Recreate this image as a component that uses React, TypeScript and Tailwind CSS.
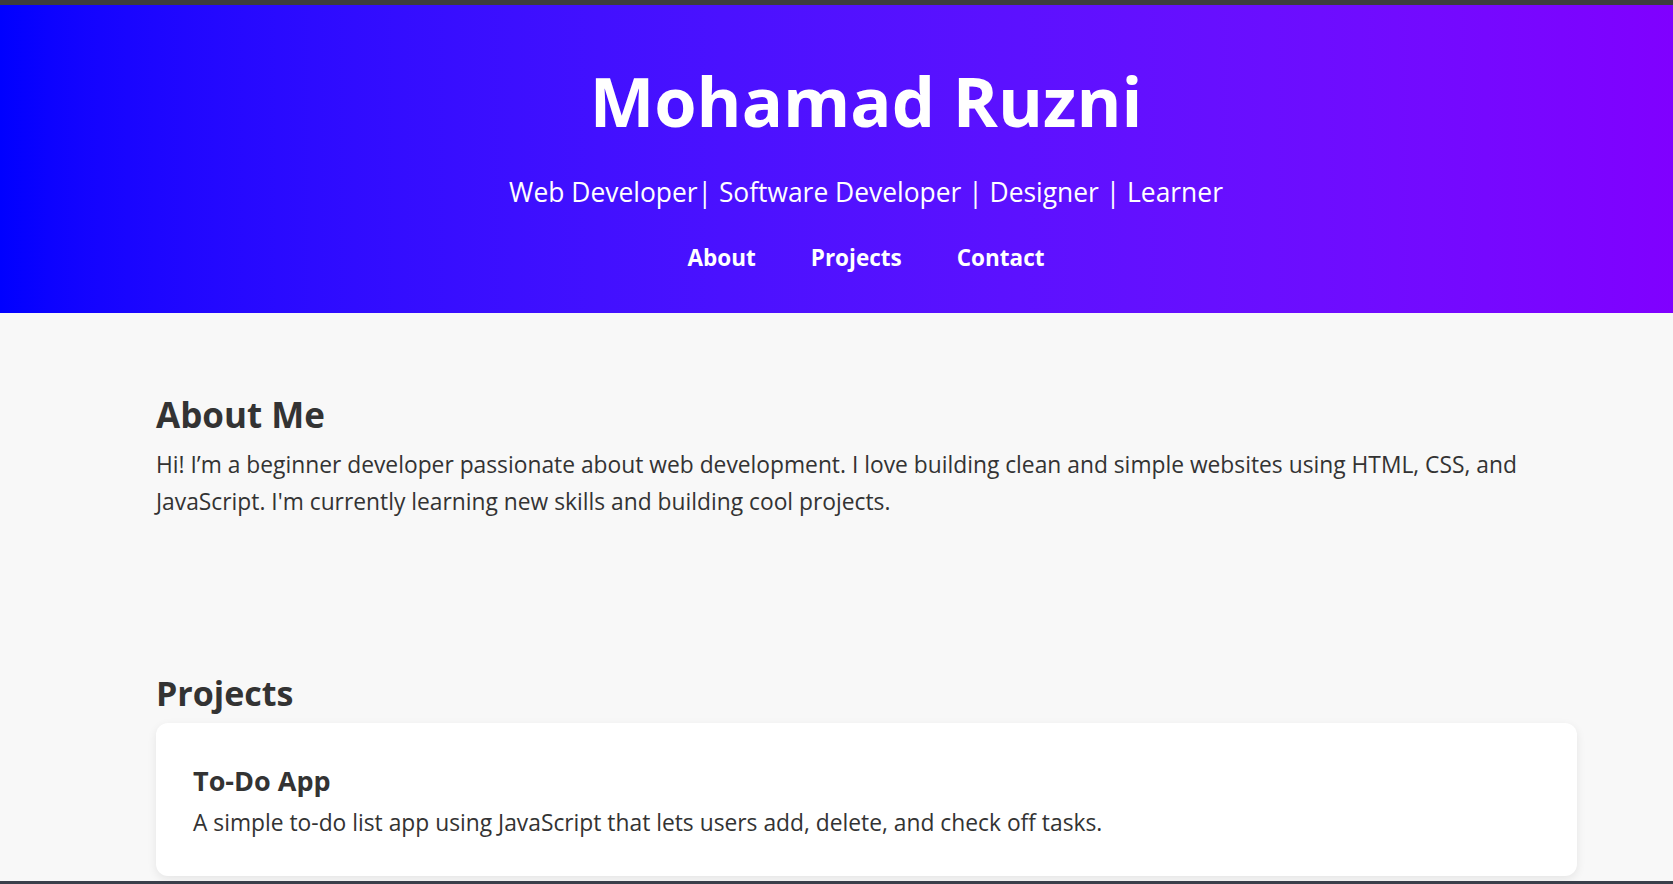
import React from 'react';

const navLinks = ['About', 'Projects', 'Contact'];

const projects = [
  {
    title: 'To-Do App',
    description:
      'A simple to-do list app using JavaScript that lets users add, delete, and check off tasks.',
  },
];

export default function App() {
  return (
    <div className="flex h-[884px] w-[1673px] flex-col overflow-hidden bg-[#f8f8f8] font-['Open_Sans',sans-serif] text-[#333333]">
      {/* window edge */}
      <div className="h-[5px] shrink-0 bg-[#3d3d3d]" />

      {/* Header */}
      <header className="flex h-[308px] shrink-0 flex-col items-center bg-gradient-to-r from-[#0000ff] to-[#8000ff] pl-[59px] pt-[56px] text-white">
        <h1 className="text-[68.5px] font-bold leading-[80px]">Mohamad Ruzni</h1>
        <p className="mt-[32.5px] text-[26.4px] leading-[36px]">
          Web Developer| Software Developer | Designer | Learner
        </p>
        <nav className="mt-[33.5px] flex gap-[55px]">
          {navLinks.map((link) => (
            <a key={link} href={`#${link.toLowerCase()}`} className="text-[22.5px] font-bold leading-[30px] text-white">
              {link}
            </a>
          ))}
        </nav>
      </header>

      {/* Main content */}
      <main className="flex-1 pl-[156px] pr-[96px] pt-[80px]">
        <section id="about">
          <h2 className="text-[35px] font-bold leading-[44px]">About Me</h2>
          <p className="mt-[8.5px] text-[22.8px] leading-[37.5px]">
            Hi! I’m a beginner developer passionate about web development. I love building clean and simple websites
            using HTML, CSS, and JavaScript. I'm currently learning new skills and building cool projects.
          </p>
        </section>

        <section id="projects" className="mt-[150px]">
          <h2 className="text-[34px] font-bold leading-[44px]">Projects</h2>
          {projects.map((project) => (
            <div
              key={project.title}
              className="mt-[8px] h-[153px] rounded-[12px] bg-white pl-[37px] pt-[42px] shadow-[0_3px_10px_rgba(0,0,0,0.08)]"
            >
              <h3 className="text-[27px] font-bold leading-[32px]">{project.title}</h3>
              <p className="mt-[10.5px] text-[22.8px] leading-[32px]">{project.description}</p>
            </div>
          ))}
        </section>
      </main>

      {/* window edge */}
      <div className="h-[3px] shrink-0 bg-[#3a3f4a]" />
    </div>
  );
}
